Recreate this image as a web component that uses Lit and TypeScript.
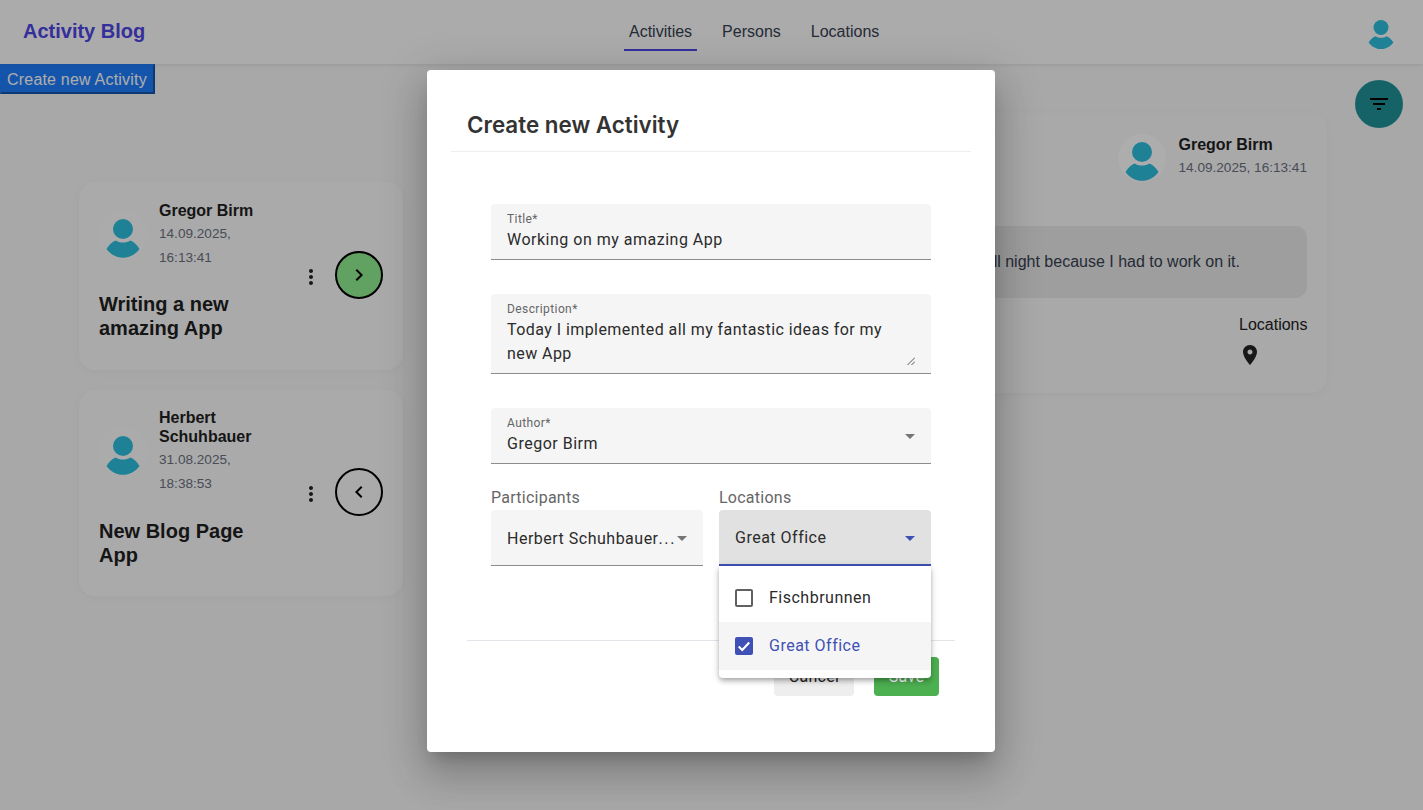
import { LitElement, html, css, svg } from "lit";
import { customElement } from "lit/decorators.js";

const avatar = (cls: string) => html`<svg class="avatar ${cls}" viewBox="0 0 48 48">
  <circle cx="24" cy="24" r="24" class="disc"></circle>
  <circle cx="24" cy="18" r="10" class="fig"></circle>
  <path class="fig" d="M7.5 38C10 33.5 13.5 30.5 17 29.5C20 32.2 28 32.2 31 29.5C34.5 30.5 38 33.5 40.5 38C36.5 43.5 30.5 46.8 24 46.8C17.5 46.8 11.5 43.5 7.5 38Z"></path>
</svg>`;

const icon = (d: string, cls = "") => html`<svg class="icon ${cls}" viewBox="0 0 24 24">${svg`<path d=${d}></path>`}</svg>`;

const DOTS = "M12 8c1.1 0 2-.9 2-2s-.9-2-2-2-2 .9-2 2 .9 2 2 2zm0 2c-1.1 0-2 .9-2 2s.9 2 2 2 2-.9 2-2-.9-2-2-2zm0 6c-1.1 0-2 .9-2 2s.9 2 2 2 2-.9 2-2-.9-2-2-2z";
const NEXT = "M10 6L8.59 7.41 13.17 12l-4.58 4.59L10 18l6-6z";
const PREV = "M15.41 7.41L14 6l-6 6 6 6 1.41-1.41L10.83 12z";
const FILTER = "M10 18h4v-2h-4v2zM3 6v2h18V6H3zm3 7h12v-2H6v2z";
const PIN = "M12 2C8.13 2 5 5.13 5 9c0 5.25 7 13 7 13s7-7.75 7-13c0-3.87-3.13-7-7-7zm0 9.5c-1.38 0-2.5-1.12-2.5-2.5s1.12-2.5 2.5-2.5 2.5 1.12 2.5 2.5-1.12 2.5-2.5 2.5z";

const cards = [
  { name: "Gregor Birm", date: "14.09.2025, 16:13:41", title: "Writing a new amazing App", open: true },
  { name: "Herbert Schuhbauer", date: "31.08.2025, 18:38:53", title: "New Blog Page App", open: false },
];

@customElement("app-root")
export class AppRoot extends LitElement {
  static styles = css`
    :host { display: block; height: 810px; overflow: hidden; position: relative; background: #f8f8f8; font-family: "Liberation Sans", Arial, sans-serif; color: #222; }
    .icon { width: 24px; height: 24px; display: block; flex: none; fill: currentColor; }
    .avatar { width: 48px; height: 48px; display: block; flex: none; }
    .avatar .disc { fill: #fcfdfd; }
    .avatar .fig { fill: #2ebede; }
    .avatar.strong .disc { fill: #ffffff; }
    .avatar.small { width: 36px; height: 36px; }

    header { height: 64px; display: flex; align-items: center; justify-content: space-between; padding: 0 24px 0 23px; background: #fcfcfc; box-shadow: 0 1px 4px rgba(0,0,0,.1); position: relative; }
    .logo { font-size: 20px; font-weight: 700; color: #4f46e5; padding-bottom: 2px; }
    nav { display: flex; gap: 20px; align-self: flex-end; }
    .tab { padding: 8px 5px 0; height: 38px; margin-bottom: 13px; font-size: 16px; line-height: 22px; color: #374151; box-sizing: border-box; border-bottom: 2px solid transparent; }
    .tab.active { border-bottom-color: #4f46e5; }

    .create { display: block; box-sizing: border-box; height: 30px; width: 155px; padding: 2px 5px 0; border: 2px outset #1e7efd; background: #1e7efd; color: #fff; font: 16px "Liberation Sans", Arial, sans-serif; letter-spacing: .2px; white-space: nowrap; text-align: left; }
    .fab { position: absolute; left: 1355px; top: 80px; width: 48px; height: 48px; border-radius: 50%; background: #1f9399; color: #000; display: flex; align-items: center; justify-content: center; }

    main { display: flex; gap: 60px; padding-left: 79px; align-items: flex-start; }
    .list { width: 324px; flex: none; display: flex; flex-direction: column; gap: 20px; margin-top: 88px; }
    .card { background: #fbfbfb; border-radius: 16px; box-shadow: 0 2px 8px rgba(0,0,0,.04); }
    .item { display: flex; align-items: center; justify-content: space-between; padding: 18.5px 20px 29.5px; box-sizing: border-box; }
    .item .left { width: 178px; }
    .who { display: flex; gap: 12px; align-items: center; }
    .name { font-size: 16px; font-weight: 700; line-height: 19.2px; color: #1f1f1f; }
    .date { font-size: 13.6px; line-height: 24px; color: #6b7280; margin-top: 2px; }
    h3 { margin: 22.3px 0 0; font-size: 20px; line-height: 24px; font-weight: 700; color: #1f1f1f; width: 170px; }
    .actions { display: flex; align-items: center; gap: 12px; margin: 0 0 -10px; }
    .dots { color: #222; margin-top: 4px; }
    .go { width: 48px; height: 48px; border-radius: 50%; box-sizing: border-box; border: 2px solid #000; display: flex; align-items: center; justify-content: center; color: #000; }
    .go.open { background: #90ee90; }

    .detail { margin-top: 19px; width: 864px; flex: none; height: 280px; box-sizing: border-box; padding: 21px 20px 26px; background: #f9f9f9; }
    .detail .who { justify-content: flex-end; }
    .detail .meta { padding-bottom: 1px; }
    .detail .date { white-space: nowrap; }
    .detail .body { margin-top: 44px; height: 72px; border-radius: 12px; background: #e9e9e9; color: #374151; font-size: 16px; line-height: 72px; text-align: right; padding-right: 67px; white-space: nowrap; }
    .places { margin: 17px 0 0 auto; width: 68px; font-size: 16px; line-height: 20px; color: #222; }
    .places .icon { margin: 8px 0 0 -1px; }

    .overlay { position: absolute; inset: 0; background: rgba(0,0,0,.32); display: flex; justify-content: center; align-items: flex-start; padding: 70px 1px 0 0; }
    .modal { width: 568px; box-sizing: border-box; background: #fff; border-radius: 4px; padding: 38px 24px 56px; font-family: Roboto, sans-serif; box-shadow: 0 11px 15px -7px rgba(0,0,0,.2), 0 24px 38px 3px rgba(0,0,0,.14), 0 9px 46px 8px rgba(0,0,0,.12); }
    h2 { margin: 0; padding: 1px 16px 10px; font: 600 22.4px/32px Inter, sans-serif; color: #333; border-bottom: 1px solid #eee; }
    form { display: flex; flex-direction: column; padding: 52px 40px 0; }
    .field { background: #f5f5f5; border-radius: 4px 4px 0 0; border-bottom: 1px solid #8c8c8c; box-sizing: border-box; padding: 7px 16px 0; letter-spacing: .5px; font-size: 16px; line-height: 24px; color: #2b2b2b; position: relative; }
    .field.one { height: 56px; margin-bottom: 34px; }
    .field.area { height: 80px; margin-bottom: 34px; letter-spacing: .44px; }
    .field label { display: block; font-size: 12px; line-height: 16px; letter-spacing: .4px; color: #666; margin-bottom: 1px; }
    .field .value { display: block; }
    .grip { position: absolute; right: 16px; bottom: 8px; width: 8px; height: 8px; }
    .arrow { width: 0; height: 0; flex: none; border-left: 5px solid transparent; border-right: 5px solid transparent; border-top: 5px solid #757575; }
    .field.one .arrow { position: absolute; right: 16px; top: 25.5px; }
    .field.one.author { margin-bottom: 0; }
    .row { display: flex; gap: 16px; margin-top: 24px; position: relative; }
    .col { flex: 1; min-width: 0; position: relative; }
    .col > label { display: block; font-size: 16px; line-height: 20px; letter-spacing: .25px; color: #666; margin-bottom: 2px; }
    .sel { height: 56px; padding: 2px 16px 0; display: flex; align-items: center; }
    .sel .value { flex: 1; min-width: 0; white-space: nowrap; }
    .more { letter-spacing: 1.6px; }
    .sel.focus { background: #e1e1e1; border-bottom: 2px solid #3f51b5; }
    .sel.focus .arrow { border-top-color: #3f51b5; }
    .panel { position: absolute; left: 0; right: 0; top: 78px; background: #fff; border-radius: 0 0 4px 4px; padding: 8px 0; z-index: 2; box-shadow: 0 2px 4px -1px rgba(0,0,0,.2), 0 4px 5px 0 rgba(0,0,0,.14), 0 1px 10px 0 rgba(0,0,0,.12); }
    .opt { height: 48px; box-sizing: border-box; padding: 0 16px 2px; display: flex; align-items: center; gap: 16px; font-size: 16px; letter-spacing: .5px; color: #2b2b2b; }
    .opt.on { background: #f5f5f5; color: #3f51b5; }
    .box { width: 18px; height: 18px; box-sizing: border-box; border: 2px solid #616161; border-radius: 2px; flex: none; position: relative; top: 1px; }
    .box.on { background: #3f51b5; border-color: #3f51b5; display: flex; align-items: center; justify-content: center; }
    .box svg { width: 14px; height: 14px; display: block; }
    footer { margin: 74px 16px 0; border-top: 1px solid #e2e4ea; padding: 16px 16px 0; display: flex; justify-content: flex-end; gap: 20px; }
    .btn { height: 39px; border-radius: 4px; display: flex; align-items: center; justify-content: center; font: 16px Roboto, sans-serif; letter-spacing: .3px; }
    .cancel { width: 80px; background: #eee; color: #222; }
    .save { width: 65px; background: #4caf50; color: #fff; }
  `;

  render() {
    return html`
      <header>
        <div class="logo">Activity Blog</div>
        <nav>
          <div class="tab active">Activities</div>
          <div class="tab">Persons</div>
          <div class="tab">Locations</div>
        </nav>
        ${avatar("small")}
      </header>
      <button class="create">Create new Activity</button>
      <main>
        <div class="list">
          ${cards.map((c) => html`
            <section class="card item">
              <div class="left">
                <div class="who">
                  ${avatar("")}
                  <div>
                    <div class="name">${c.name}</div>
                    <div class="date">${c.date}</div>
                  </div>
                </div>
                <h3>${c.title}</h3>
              </div>
              <div class="actions">
                <div class="dots">${icon(DOTS)}</div>
                <div class="go ${c.open ? "open" : ""}">${icon(c.open ? NEXT : PREV)}</div>
              </div>
            </section>`)}
        </div>
        <section class="card detail">
          <div class="who">
            ${avatar("strong")}
            <div class="meta">
              <div class="name">Gregor Birm</div>
              <div class="date">14.09.2025, 16:13:41</div>
            </div>
          </div>
          <div class="body">I could not sleep all night because I had to work on it.</div>
          <div class="places">Locations${icon(PIN)}</div>
        </section>
      </main>
      <div class="fab">${icon(FILTER)}</div>

      <div class="overlay">
        <div class="modal">
          <h2>Create new Activity</h2>
          <form>
            <div class="field one"><label>Title*</label><span class="value">Working on my amazing App</span></div>
            <div class="field area">
              <label>Description*</label><span class="value">Today I implemented all my fantastic ideas for my new App</span>
              <svg class="grip" viewBox="0 0 8 8"><path d="M0.5 8L8 0.5M4.5 8L8 4.5" stroke="#555" stroke-width="1" fill="none"></path></svg>
            </div>
            <div class="field one author"><label>Author*</label><span class="value">Gregor Birm</span><span class="arrow"></span></div>
            <div class="row">
              <div class="col">
                <label>Participants</label>
                <div class="field sel"><span class="value">Herbert Schuhbauer<span class="more">...</span></span><span class="arrow"></span></div>
              </div>
              <div class="col">
                <label>Locations</label>
                <div class="field sel focus"><span class="value">Great Office</span><span class="arrow"></span></div>
                <div class="panel">
                  <div class="opt"><span class="box"></span>Fischbrunnen</div>
                  <div class="opt on"><span class="box on"><svg viewBox="0 0 24 24"><path d="M3 13l6 6L21 6" stroke="#fff" stroke-width="3.6" fill="none"></path></svg></span>Great Office</div>
                </div>
              </div>
            </div>
          </form>
          <footer>
            <div class="btn cancel">Cancel</div>
            <div class="btn save">Save</div>
          </footer>
        </div>
      </div>
    `;
  }
}
